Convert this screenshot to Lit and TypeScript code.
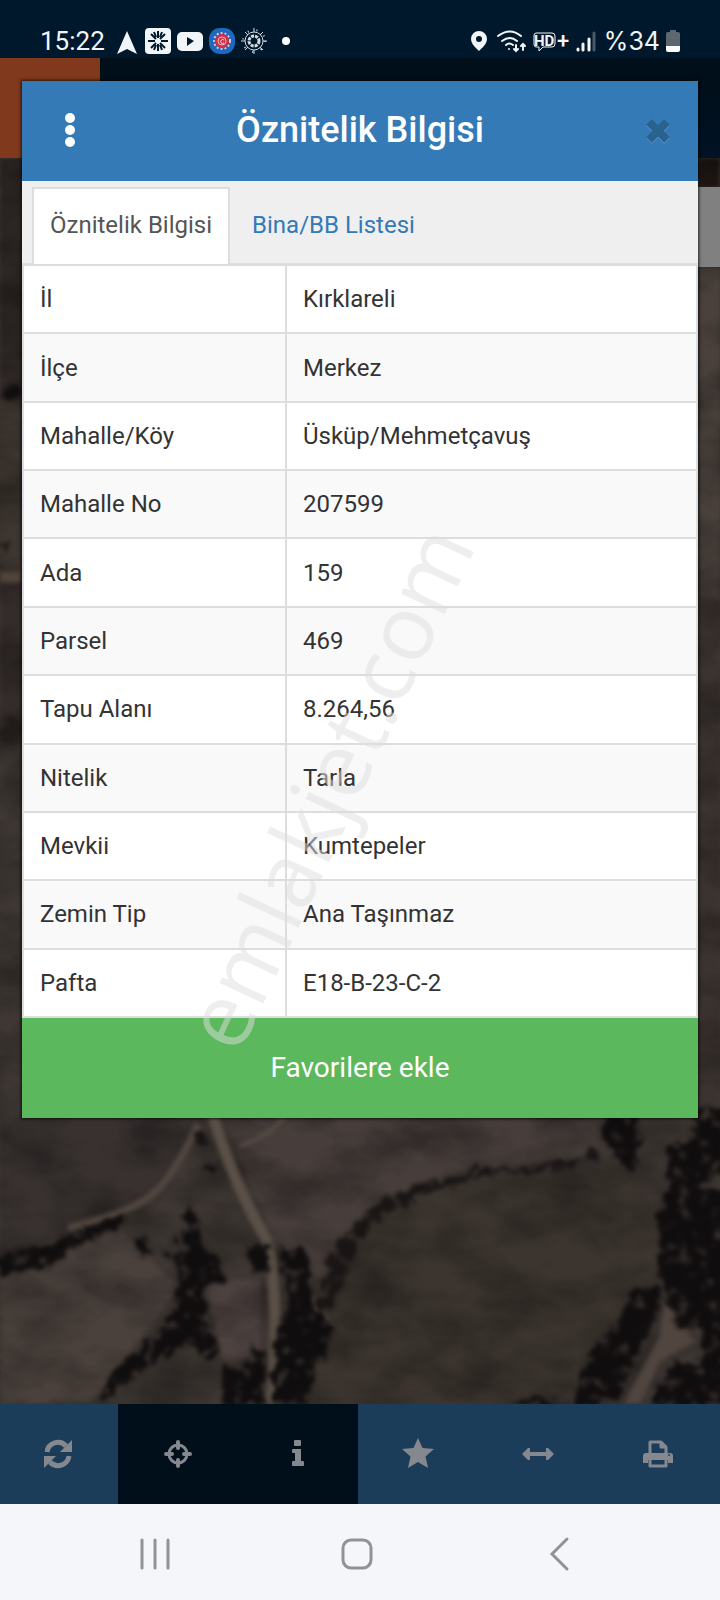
import { LitElement, html, css, svg } from 'lit';
import { customElement, property, state } from 'lit/decorators.js';

interface Attribute {
  label: string;
  value: string;
}

const ATTRIBUTES: Attribute[] = [
  { label: 'İl', value: 'Kırklareli' },
  { label: 'İlçe', value: 'Merkez' },
  { label: 'Mahalle/Köy', value: 'Üsküp/Mehmetçavuş' },
  { label: 'Mahalle No', value: '207599' },
  { label: 'Ada', value: '159' },
  { label: 'Parsel', value: '469' },
  { label: 'Tapu Alanı', value: '8.264,56' },
  { label: 'Nitelik', value: 'Tarla' },
  { label: 'Mevkii', value: 'Kumtepeler' },
  { label: 'Zemin Tip', value: 'Ana Taşınmaz' },
  { label: 'Pafta', value: 'E18-B-23-C-2' },
];

// 28x28 icons of the map toolbar
const TOOLS = [
  {
    label: 'Yenile',
    dark: false,
    icon: svg`
      <path d="M3 12A11 11 0 0 1 22 6" fill="none" stroke="currentColor" stroke-width="5" />
      <path d="M28 0v12H16z" />
      <path d="M25 16A11 11 0 0 1 6 22" fill="none" stroke="currentColor" stroke-width="5" />
      <path d="M0 28V16h12z" />`,
  },
  {
    label: 'Konum',
    dark: true,
    icon: svg`
      <circle cx="14" cy="14" r="9" fill="none" stroke="currentColor" stroke-width="3" />
      <path d="M14 2v6M14 20v6M2 14h6M20 14h6" stroke="currentColor" stroke-width="4" stroke-linecap="round" />`,
  },
  {
    label: 'Bilgi',
    dark: true,
    icon: svg`<path d="M11 0h5q1 0 1 1v4q0 1-1 1h-5q-1 0-1-1V1q0-1 1-1zM9 9h8v12h2q1 0 1 1v3q0 1-1 1H9q-1 0-1-1v-3q0-1 1-1h2v-8H9q-1 0-1-1v-2q0-1 1-1z" />`,
  },
  {
    label: 'Favoriler',
    dark: false,
    icon: svg`<path d="M14-2l4.5 10 11.5 1-8.500 7.500 2.500 11.500-10-6-10 6 2.500-11.500L-2 9l11.500-1z" />`,
  },
  {
    label: 'Ölçüm',
    dark: false,
    icon: svg`<path d="M-2 14l6-6h2v4h16V8h2l6 6-6 6h-2v-4H6v4H4z" />`,
  },
  {
    label: 'Yazdır',
    dark: false,
    icon: svg`
      <path d="M6 14V2h11l5 5v7M17 2v5h5" fill="none" stroke="currentColor" stroke-width="3" stroke-linejoin="round" />
      <path d="M2 13h24q3 0 3 3v7h-5v-3H4v3h-5v-7q0-3 3-3z" />
      <path d="M6 20v6h16v-6" fill="none" stroke="currentColor" stroke-width="3" stroke-linejoin="round" />
      <circle cx="25" cy="15" r="1" fill="#1b3d5a" />`,
  },
];

@customElement('phone-status-bar')
export class PhoneStatusBar extends LitElement {
  static styles = css`
    :host {
      display: flex;
      justify-content: space-between;
      align-items: center;
      height: 58px;
      padding: 24px 40px 0;
      box-sizing: border-box;
      background: #00182b;
      color: #f2f5f7;
      font: 26px/34px Roboto, sans-serif;
    }

    .group {
      display: flex;
      align-items: center;
      gap: 6px;
    }

    .time {
      padding-right: 2px;
    }

    svg {
      display: block;
      overflow: visible;
    }

    .battery {
      font-size: 25px;
      font-family: Inter, sans-serif;
    }

    .hd {
      font: bold 15px Roboto, sans-serif;
    }

    .plus {
      font: 500 22px Roboto, sans-serif;
    }
  `;

  render() {
    return html`
      <div class="group">
        <span class="time">15:22</span>
        <svg width="26" height="26" viewBox="0 0 26 26" fill="#f2f5f7">
          <path d="M14 3l10 23-10-5-10 5z" />
        </svg>
        <svg width="26" height="26" viewBox="0 0 26 26">
          <rect width="26" height="26" rx="4" fill="#f2f5f7" />
          <path
            d="M13 3v7M13 16v7M3 13h7M16 13h7M6 6l5 5M15 15l5 5M20 6l-5 5M11 15l-5 5M9 4l2 5M17 4l-2 5M9 22l2-5M17 22l-2-5"
            stroke="#00182b"
            stroke-width="2"
          />
        </svg>
        <svg width="26" height="26" viewBox="0 0 26 26">
          <rect y="4" width="26" height="19" rx="5" fill="#f2f5f7" />
          <path d="M10 9l7 4-7 5z" fill="#00182b" />
        </svg>
        <svg width="26" height="26" viewBox="0 0 26 26">
          <rect width="26" height="26" rx="11" fill="#1b6ac0" />
          <circle cx="13" cy="13" r="8" fill="none" stroke="#e9c6cf" stroke-width="2" stroke-dasharray="2 2" />
          <circle cx="13" cy="13" r="7" fill="#d22f45" />
          <circle cx="13" cy="13" r="4" fill="none" stroke="#f0b9c2" stroke-width="1" />
          <path d="M15 12a2 2 0 1 0 0 3" fill="none" stroke="#f6dfe3" stroke-width="1" />
        </svg>
        <svg width="26" height="26" viewBox="0 0 26 26" fill="none" stroke="#d5dce2">
          <circle cx="13" cy="13" r="11" stroke-width="2" stroke-dasharray="1 8" />
          <circle cx="13" cy="13" r="9" stroke-width="1" />
          <circle cx="13" cy="13" r="5" stroke-width="3" stroke-dasharray="3 1" />
          <path d="M13 0v4M13 22v4M0 13h4M22 13h4M4 4l3 3M22 4l-3 3M4 22l3-3M22 22l-3-3" stroke-width="1" />
        </svg>
        <svg width="26" height="26" viewBox="0 0 26 26" fill="#fff">
          <circle cx="13" cy="13" r="4" />
        </svg>
      </div>
      <div class="group">
        <svg width="20" height="22" viewBox="0 0 20 22" fill="#f2f5f7">
          <path fill-rule="evenodd" d="M8 1a8 8 0 0 1 8 8c0 5-5 9-8 12-3-3-8-7-8-12a8 8 0 0 1 8-8zm0 5a3 3 0 1 0 0 6 3 3 0 0 0 0-6z" />
        </svg>
        <svg width="30" height="24" viewBox="0 0 30 24" fill="none" stroke="#f2f5f7" stroke-width="2" stroke-linecap="round">
          <path d="M1 7q12-9 23 0M5 12q8-6 15 0M9 16q3-3 7 0" />
          <circle cx="12" cy="20" r="1" fill="#f2f5f7" stroke="none" />
          <path d="M19 16v6M17 20l2 2 2-2M26 21v-6M24 17l2-2 2 2" />
        </svg>
        <svg width="37" height="24" viewBox="0 0 37 24">
          <path
            d="M3 4h16q3 0 3 3v8q0 3-3 3h-9l-4 4v-4H3q-2 0-2-3V7q0-3 2-3z"
            fill="none"
            stroke="#f2f5f7"
            stroke-width="1"
          />
          <text class="hd" x="1" y="17" fill="#f2f5f7">HD</text>
          <text class="plus" x="24" y="19" fill="#f2f5f7">+</text>
        </svg>
        <svg width="22" height="24" viewBox="0 0 22 24" stroke-width="3" stroke-linecap="round">
          <path d="M2 20v1M7 15v6M13 10v11" stroke="#f2f5f7" />
          <path d="M18 4v17" stroke="#4a5a68" />
        </svg>
        <span class="battery">%34</span>
        <svg width="14" height="24" viewBox="0 0 14 24">
          <path d="M4 1h6v2h2q2 0 2 2v12H0V5q0-2 2-2h2z" fill="#5c6770" />
          <path d="M0 17h14v4q0 2-2 2H2q-2 0-2-2z" fill="#fff" />
        </svg>
      </div>
    `;
  }
}

@customElement('satellite-map')
export class SatelliteMap extends LitElement {
  static styles = css`
    :host {
      display: block;
      background: #38312e;
    }

    svg {
      display: block;
      width: 100%;
      height: 100%;
    }
  `;

  render() {
    return html`
      <svg viewBox="0 158 720 1246" preserveAspectRatio="xMidYMax slice" aria-hidden="true">
        <defs>
          <filter id="soil" x="0" y="0" width="100%" height="100%" color-interpolation-filters="sRGB">
            <feTurbulence type="fractalNoise" baseFrequency="0.015 0.025" numOctaves="5" seed="7" />
            <feColorMatrix values="0 0 0 0 0  0 0 0 0 0  0 0 0 0 0  1.2 0 0 0 -0.4" />
          </filter>
          <filter id="leafy" x="-10%" y="-10%" width="120%" height="120%" color-interpolation-filters="sRGB">
            <feTurbulence type="fractalNoise" baseFrequency="0.09" numOctaves="3" seed="3" result="noise" />
            <feDisplacementMap
              in="SourceGraphic"
              in2="noise"
              scale="18"
              xChannelSelector="R"
              yChannelSelector="G"
              result="edge"
            />
            <feColorMatrix in="noise" values="0 0 0 0 0  0 0 0 0 0  0 0 0 0 0  0 0 5 0 -1.200" result="gaps" />
            <feComposite in="edge" in2="gaps" operator="in" />
            <feGaussianBlur stdDeviation="2" />
          </filter>
          <filter id="soft" x="-10%" y="-10%" width="120%" height="120%" color-interpolation-filters="sRGB">
            <feGaussianBlur stdDeviation="2" />
          </filter>
        </defs>

        <rect y="158" width="720" height="1246" fill="#3e3733" />
        <g filter="url(#soft)">
          <path d="M0 158h22v300H0z" fill="#2e2725" />
          <path d="M698 158h22v30h-22z" fill="#1d1614" />
          <path d="M0 400h22v170H0z" fill="#3e3630" />
          <path d="M0 572h22v10H0z" fill="#66574b" />
          <path d="M0 584h22v160H0z" fill="#342c2a" />
          <path d="M698 268h22v330h-22z" fill="#4a413c" />
          <path d="M698 600h22v520h-22z" fill="#3b3330" />
          <path d="M0 1118h205l-45 72-40 28L0 1258z" fill="#383130" />
          <path d="M0 1270l120-42 58 60-50 70-40 46H0z" fill="#4a413c" />
          <path d="M222 1118h376v38l-150 16-88 46-40 60-42-30z" fill="#473e3b" />
          <path d="M330 1290l35-64 90-40 175-20 32 60 2 60-64 50-40 68H300z" fill="#3c352f" />
          <path d="M205 1280h55v75l-36 8z" fill="#4d4240" />
        </g>
        <rect y="158" width="720" height="1246" filter="url(#soil)" opacity=".5" />

        <g filter="url(#soft)" fill="none" stroke="#5a5047">
          <path d="M198 1124q-28 64-60 80t-70 24" stroke-width="7" stroke="#51463f" />
          <path d="M212 1112q20 70 55 128 14 70 4 164" stroke-width="11" />
          <path d="M240 1146q30-10 46-30" stroke-width="3" />
          <path d="M308 1296l24 34" stroke-width="6" stroke="#665a4f" />
          <path d="M664 1300l30 42-34 20-20 42h-16l36-68z" fill="#50453f" stroke="none" />
        </g>

        <g filter="url(#leafy)" fill="#100d0e">
          <path d="M0 1256l45-10 38-14 40-18 3 7-38 19-46 29-42 6z" />
          <path d="M187 1200l14 20-2 22 14 12 14 26-22 4v34l15 36-14 8-18-18-54 32-34 26 8-28 36-30 34-36-2-66z" />
          <path d="M250 1244h18l2 32-18-4zM280 1246l24 4 10 54-20 14-12-40z" />
          <path d="M280 1312l34-8 20 24-30 76h-34l4-54zM224 1364l16 4 14-24 12 8-2 52h-42z" />
          <path d="M134 1238l12-4 2 22-8-4zM160 1250l14 2-4 10zM192 1132h14v14h-14zM206 1166h10v8h-10z" />
          <path d="M318 1310q4-60 44-96 34-28 104-40l6-12 26 8 78-10 20-14 4 16-110 14-70 20q-46 20-64 54l-26 60z" fill="#1a1515" />
          <path d="M602 1114h36l6 22-12 34-24-18zM668 1150l22-12 8-30h26v62l-30 14-26-8z" />
          <path d="M664 1176l60 16v140l-46-6-18-48-2-68 12-18z" />
          <path d="M632 1292l24-8 6 22-24 44-18 48-46 6 14-54 24-20z" />
          <path d="M650 1404l26-44 24 6 2-40 24-6v84zM506 1404l30-8 36 8z" />
          <circle cx="12" cy="393" r="8" />
          <circle cx="10" cy="730" r="12" fill="#211b1a" />
          <circle cx="4" cy="545" r="6" fill="#211b1a" />
        </g>
      </svg>
    `;
  }
}

@customElement('attribute-dialog')
export class AttributeDialog extends LitElement {
  static styles = css`
    :host {
      display: block;
      background: #fff;
      box-shadow: 0 0 3px 1px rgba(0, 0, 0, 0.7);
      color: #333;
      font: 24px/34px Roboto, sans-serif;
    }

    button {
      border: 0;
      padding: 0;
      background: none;
      color: inherit;
      font: inherit;
      cursor: pointer;
    }

    svg {
      display: block;
    }

    .header {
      display: grid;
      grid-template-columns: 96px 1fr 96px;
      height: 100px;
      background: #337ab7;
      color: #fff;
    }

    .header button {
      display: grid;
      place-items: center;
    }

    .header .close {
      padding-left: 16px;
      color: #29618f;
    }

    .title {
      margin: 0;
      text-align: center;
      font-size: 36px;
      font-weight: 500;
      line-height: 98px;
    }

    .tabs {
      display: flex;
      height: 85px;
      padding: 6px 10px 0;
      box-sizing: border-box;
      background: #efefef;
      border-bottom: 3px solid #ddd;
    }

    .tab {
      border: 2px solid transparent;
      border-bottom: 0;
      padding: 0 16px;
      color: #337ab7;
      line-height: 72px;
      text-decoration: none;
    }

    .tab + .tab {
      margin-left: 4px;
    }

    .tab.active {
      margin-bottom: -1px;
      background: #fff;
      border-color: #ddd;
      color: #555;
    }

    .attributes {
      width: 100%;
      height: 752px;
      border-collapse: separate;
      border-spacing: 0;
      border: solid #ddd;
      border-width: 0 2px;
      table-layout: fixed;
    }

    th,
    td {
      padding: 0 16px;
      border-bottom: 2px solid #ddd;
      font-weight: 400;
      text-align: left;
    }

    th {
      width: 263px;
      box-sizing: border-box;
      border-right: 2px solid #ddd;
    }

    tr:nth-child(even) {
      background: #f9f9f9;
    }

    .favorite {
      display: block;
      width: 100%;
      height: 100px;
      background: #5cb85c;
      color: #fff;
      font-size: 28px;
    }

    .watermark {
      position: absolute;
      left: 45%;
      top: 68%;
      transform: translate(-50%, -50%) rotate(-65deg);
      color: rgba(222, 222, 222, 0.5);
      font: 90px/90px 'Open Sans', sans-serif;
      pointer-events: none;
    }
  `;

  @property({ type: Array })
  attributes: Attribute[] = [];

  @state()
  private _tab = 0;

  private _onTabClick(index: number, e: MouseEvent) {
    e.preventDefault();
    this._tab = index;
  }

  render() {
    return html`
      <header class="header">
        <button aria-label="Menü">
          <svg width="12" height="36" viewBox="0 0 12 36" fill="#fff">
            <circle cx="6" cy="5" r="5" />
            <circle cx="6" cy="17" r="5" />
            <circle cx="6" cy="29" r="5" />
          </svg>
        </button>
        <h1 class="title">Öznitelik Bilgisi</h1>
        <button class="close" aria-label="Kapat">
          <svg width="26" height="27" viewBox="0 0 26 27" stroke-width="8">
            <path d="M4 5l18 18M22 5L4 23" stroke="#5c97c8" />
            <path d="M4 4l18 18M22 4L4 22" stroke="currentColor" />
          </svg>
        </button>
      </header>
      <nav class="tabs">
        ${['Öznitelik Bilgisi', 'Bina/BB Listesi'].map(
          (label, i) => html`
            <a
              class="tab ${this._tab === i ? 'active' : ''}"
              href="#"
              @click=${(e: MouseEvent) => this._onTabClick(i, e)}
              >${label}</a
            >
          `
        )}
      </nav>
      <table class="attributes">
        <tbody>
          ${this.attributes.map(
            (row) => html`
              <tr>
                <th scope="row">${row.label}</th>
                <td>${row.value}</td>
              </tr>
            `
          )}
        </tbody>
      </table>
      <button class="favorite">Favorilere ekle</button>
      <span class="watermark">emlakjet.com</span>
    `;
  }
}

@customElement('app-root')
export class AppRoot extends LitElement {
  static styles = css`
    :host {
      display: flex;
      flex-direction: column;
      position: relative;
      min-height: 100vh;
      overflow: hidden;
      background: #f5f6f9;
    }

    button {
      display: grid;
      place-items: center;
      border: 0;
      padding: 0;
      background: none;
      color: inherit;
      cursor: pointer;
    }

    svg {
      display: block;
      overflow: visible;
    }

    .app-bar {
      height: 100px;
      background: linear-gradient(#000f1a 24px, #001224);
    }

    .logo {
      width: 100px;
      height: 100px;
      background: #80391c;
    }

    .map {
      display: grid;
      flex: 1;
      min-height: 1000px;
      position: relative;
    }

    .search {
      position: absolute;
      top: 29px;
      right: 0;
      width: 50%;
      height: 80px;
      background: #808080;
    }

    .dialog {
      position: absolute;
      top: 81px;
      left: 22px;
      right: 22px;
    }

    .toolbar {
      display: grid;
      grid-template-columns: repeat(6, 1fr);
      height: 100px;
      margin-left: -2px;
      padding-right: 2px;
      background: #1b3d5a;
      color: #85898f;
    }

    .toolbar .dark {
      background: #000f1a;
    }

    .phone-nav {
      display: grid;
      grid-template-columns: repeat(3, 1fr);
      height: 96px;
      padding: 4px 60px 0 54px;
      box-sizing: border-box;
    }

    .phone-nav svg {
      fill: none;
      stroke: #929294;
      stroke-width: 3;
      stroke-linecap: round;
    }
  `;

  render() {
    return html`
      <phone-status-bar></phone-status-bar>
      <div class="app-bar"><div class="logo"></div></div>
      <div class="map">
        <satellite-map></satellite-map>
        <div class="search"></div>
      </div>
      <div class="toolbar">
        ${TOOLS.map(
          (tool) => html`
            <button class=${tool.dark ? 'dark' : ''} aria-label=${tool.label}>
              <svg width="28" height="28" viewBox="0 0 28 28" fill="currentColor">${tool.icon}</svg>
            </button>
          `
        )}
      </div>
      <div class="phone-nav">
        <button aria-label="Son uygulamalar">
          <svg width="30" height="30" viewBox="0 0 30 30"><path d="M2 1v28M15 1v28M28 1v28" /></svg>
        </button>
        <button aria-label="Ana ekran">
          <svg width="30" height="30" viewBox="0 0 30 30"><rect x="1" y="1" width="28" height="28" rx="8" /></svg>
        </button>
        <button aria-label="Geri">
          <svg width="18" height="30" viewBox="0 0 18 30"><path d="M17 0L2 15l15 15" /></svg>
        </button>
      </div>
      <attribute-dialog class="dialog" .attributes=${ATTRIBUTES}></attribute-dialog>
    `;
  }
}
